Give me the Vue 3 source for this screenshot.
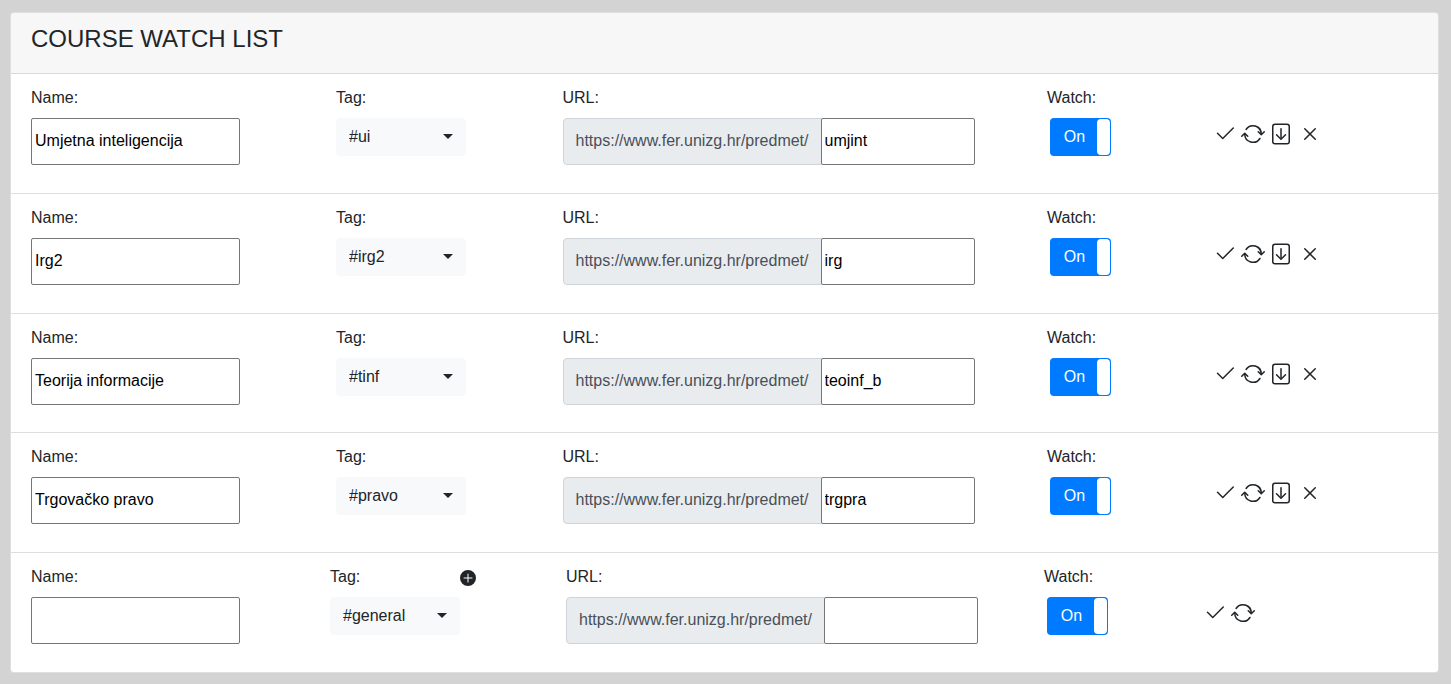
<script setup>
import { ref } from 'vue'

const baseUrl = 'https://www.fer.unizg.hr/predmet/'
const tags = ['#general', '#ui', '#irg2', '#tinf', '#pravo']

const courses = ref([
  { id: 1, name: 'Umjetna inteligencija', tag: '#ui', path: 'umjint', watch: true, saved: true },
  { id: 2, name: 'Irg2', tag: '#irg2', path: 'irg', watch: true, saved: true },
  { id: 3, name: 'Teorija informacije', tag: '#tinf', path: 'teoinf_b', watch: true, saved: true },
  { id: 4, name: 'Trgovačko pravo', tag: '#pravo', path: 'trgpra', watch: true, saved: true },
  { id: 5, name: '', tag: '#general', path: '', watch: true, saved: false },
])

const icons = {
  check: 'M13.854 3.646a.5.5 0 0 1 0 .708l-7 7a.5.5 0 0 1-.708 0l-3.5-3.5a.5.5 0 1 1 .708-.708L6.5 10.293l6.646-6.647a.5.5 0 0 1 .708 0z',
  repeatHeads: 'M2.854 7.146a.5.5 0 0 0-.708 0l-2 2a.5.5 0 1 0 .708.708L2.5 8.207l1.646 1.647a.5.5 0 0 0 .708-.708l-2-2zm13-1a.5.5 0 0 0-.708 0L13.5 7.793l-1.646-1.647a.5.5 0 0 0-.708.708l2 2a.5.5 0 0 0 .708 0l2-2a.5.5 0 0 0 0-.708z',
  repeatArcs: 'M8 3a4.995 4.995 0 0 0-4.192 2.273.5.5 0 0 1-.837-.546A6 6 0 0 1 14 8a.5.5 0 0 1-1.001 0 5 5 0 0 0-5-5zM2.5 7.5A.5.5 0 0 1 3 8a5 5 0 0 0 9.192 2.727.5.5 0 1 1 .837.546A6 6 0 0 1 2 8a.5.5 0 0 1 .501-.5z',
  fileFrame: 'M4 1h8a2 2 0 0 1 2 2v10a2 2 0 0 1-2 2H4a2 2 0 0 1-2-2V3a2 2 0 0 1 2-2zm0 1a1 1 0 0 0-1 1v10a1 1 0 0 0 1 1h8a1 1 0 0 0 1-1V3a1 1 0 0 0-1-1H4z',
  fileHead: 'M4.646 8.146a.5.5 0 0 1 .708 0L8 10.793l2.646-2.647a.5.5 0 0 1 .708.708l-3 3a.5.5 0 0 1-.708 0l-3-3a.5.5 0 0 1 0-.708z',
  fileStem: 'M8 4a.5.5 0 0 1 .5.5v6a.5.5 0 0 1-1 0v-6A.5.5 0 0 1 8 4z',
  crossA: 'M11.854 4.146a.5.5 0 0 1 0 .708l-7 7a.5.5 0 0 1-.708-.708l7-7a.5.5 0 0 1 .708 0z',
  crossB: 'M4.146 4.146a.5.5 0 0 0 0 .708l7 7a.5.5 0 0 0 .708-.708l-7-7a.5.5 0 0 0-.708 0z',
  plus: 'M16 8A8 8 0 1 1 0 8a8 8 0 0 1 16 0zM8.5 4a.5.5 0 0 0-1 0v3.5H4a.5.5 0 0 0 0 1h3.5V12a.5.5 0 0 0 1 0V8.5H12a.5.5 0 0 0 0-1H8.5V4z',
}

const savedActions = [
  { label: 'Save', paths: [icons.check] },
  { label: 'Reset', paths: [icons.repeatHeads, icons.repeatArcs] },
  { label: 'Download', paths: [icons.fileFrame, icons.fileHead, icons.fileStem] },
  { label: 'Remove', paths: [icons.crossA, icons.crossB] },
]
const actionsFor = (course) => (course.saved ? savedActions : savedActions.slice(0, 2))
</script>

<template>
  <main class="page">
    <section class="card">
      <header class="card-header">
        <h1>COURSE WATCH LIST</h1>
      </header>
      <form
        v-for="course in courses"
        :key="course.id"
        class="row"
        :class="{ 'row-new': !course.saved }"
        @submit.prevent
      >
        <div class="field">
          <label :for="`name-${course.id}`">Name:</label>
          <input :id="`name-${course.id}`" v-model="course.name" type="text" class="text name" />
        </div>
        <div class="field">
          <div class="tag-head">
            <label :for="`tag-${course.id}`">Tag:</label>
            <button v-if="!course.saved" type="button" class="icon-button" aria-label="Add tag">
              <svg width="16" height="16" viewBox="0 0 16 16" fill="currentColor"><path fill-rule="evenodd" :d="icons.plus" /></svg>
            </button>
          </div>
          <div class="select">
            <select :id="`tag-${course.id}`" v-model="course.tag">
              <option v-for="tag in tags" :key="tag">{{ tag }}</option>
            </select>
          </div>
        </div>
        <div class="field">
          <label :for="`url-${course.id}`">URL:</label>
          <div class="url">
            <span class="prefix">{{ baseUrl }}</span>
            <input :id="`url-${course.id}`" v-model="course.path" type="text" class="text path" />
          </div>
        </div>
        <div class="field">
          <label :for="`watch-${course.id}`">Watch:</label>
          <label class="toggle" :class="{ off: !course.watch }">
            <input :id="`watch-${course.id}`" v-model="course.watch" type="checkbox" />
            <span class="toggle-text">{{ course.watch ? 'On' : 'Off' }}</span>
            <span class="toggle-handle"></span>
          </label>
        </div>
        <div class="actions">
          <template v-for="action in actionsFor(course)" :key="action.label">
            <button type="button" class="icon-button" :aria-label="action.label"><svg width="24" height="24" viewBox="0 0 16 16" fill="currentColor"><path v-for="d in action.paths" :key="d" fill-rule="evenodd" :d="d" /></svg></button>{{ ' ' }}
          </template>
        </div>
      </form>
    </section>
  </main>
</template>

<style>
body {
  background: #d3d3d3;
}
</style>

<style scoped>
.page,
.page * {
  box-sizing: border-box;
}

.page {
  padding: 12px 12px 11px 10px;
  color: #212529;
  font-family: "Liberation Sans", Arial, sans-serif;
  font-size: 16px;
  line-height: 24px;
}

.card {
  display: flex;
  flex-direction: column;
  min-height: calc(100vh - 23px);
  background: #fff;
  border: 1px solid rgba(0, 0, 0, 0.125);
  border-radius: 4px;
}

.card-header {
  padding: 12px 20px 20px;
  background: rgba(0, 0, 0, 0.03);
  border-bottom: 1px solid rgba(0, 0, 0, 0.125);
  border-radius: 3px 3px 0 0;
}

h1 {
  margin: 0;
  font-size: 24px;
  font-weight: 500;
  line-height: 28px;
}

.row {
  display: grid;
  flex: 1 1 auto;
  grid-template-columns: 610fr 453fr 969fr 331fr 411fr;
  align-items: start;
  margin: 0;
  padding: 12px 20px 24px;
  border-bottom: 1px solid rgba(0, 0, 0, 0.125);
}

.row:last-child {
  border-bottom: 0;
}

.row-new {
  grid-template-columns: 299fr 236fr 478fr 159fr 215fr;
}

.field {
  display: flex;
  flex-direction: column;
  align-items: flex-start;
  gap: 8px;
}

.text {
  height: 47px;
  margin: 0;
  padding: 0 3px 1px;
  color: #000;
  background: #fff;
  border: 1px solid #767676;
  border-radius: 2px;
  font: inherit;
}

.name {
  width: 209px;
}

.tag-head {
  display: flex;
  align-items: flex-end;
  justify-content: space-between;
  width: 146px;
  height: 24px;
}

.tag-head .icon-button {
  padding-bottom: 3px;
}

.select {
  position: relative;
}

.select::after {
  content: "";
  position: absolute;
  top: 16px;
  right: 13px;
  border-top: 5px solid #212529;
  border-right: 5px solid transparent;
  border-left: 5px solid transparent;
  pointer-events: none;
}

select {
  display: block;
  width: 130px;
  height: 38px;
  margin: 0;
  padding: 6px 12px;
  color: #212529;
  background: #f8f9fa;
  border: 1px solid #f8f9fa;
  border-radius: 4px;
  appearance: none;
  font: inherit;
}

.url {
  display: flex;
}

.prefix {
  display: flex;
  align-items: center;
  margin-right: -1px;
  padding: 0 12px 1px;
  color: #495057;
  background: #e9ecef;
  border: 1px solid #ced4da;
  border-radius: 4px 0 0 4px;
  white-space: nowrap;
}

.path {
  position: relative;
  width: 154px;
}

.toggle {
  position: relative;
  display: flex;
  width: 61px;
  height: 38px;
  margin-left: 3px;
  padding: 1px 1px 1px 2px;
  color: #fff;
  background: #007bff;
  border-radius: 4px;
  cursor: pointer;
}

.toggle.off {
  flex-direction: row-reverse;
  background: #6c757d;
}

.toggle input {
  position: absolute;
  inset: 0;
  width: 100%;
  height: 100%;
  margin: 0;
  opacity: 0;
  cursor: pointer;
}

.toggle-text {
  flex: 1;
  line-height: 36px;
  text-align: center;
}

.toggle-handle {
  width: 13px;
  background: #fff;
  border-radius: 4px;
}

.actions {
  padding-top: 36px;
  white-space: nowrap;
}

.icon-button {
  display: inline-block;
  margin: 0;
  padding: 0;
  color: inherit;
  background: none;
  border: 0;
  vertical-align: top;
  cursor: pointer;
}

.icon-button svg {
  display: block;
}
</style>
